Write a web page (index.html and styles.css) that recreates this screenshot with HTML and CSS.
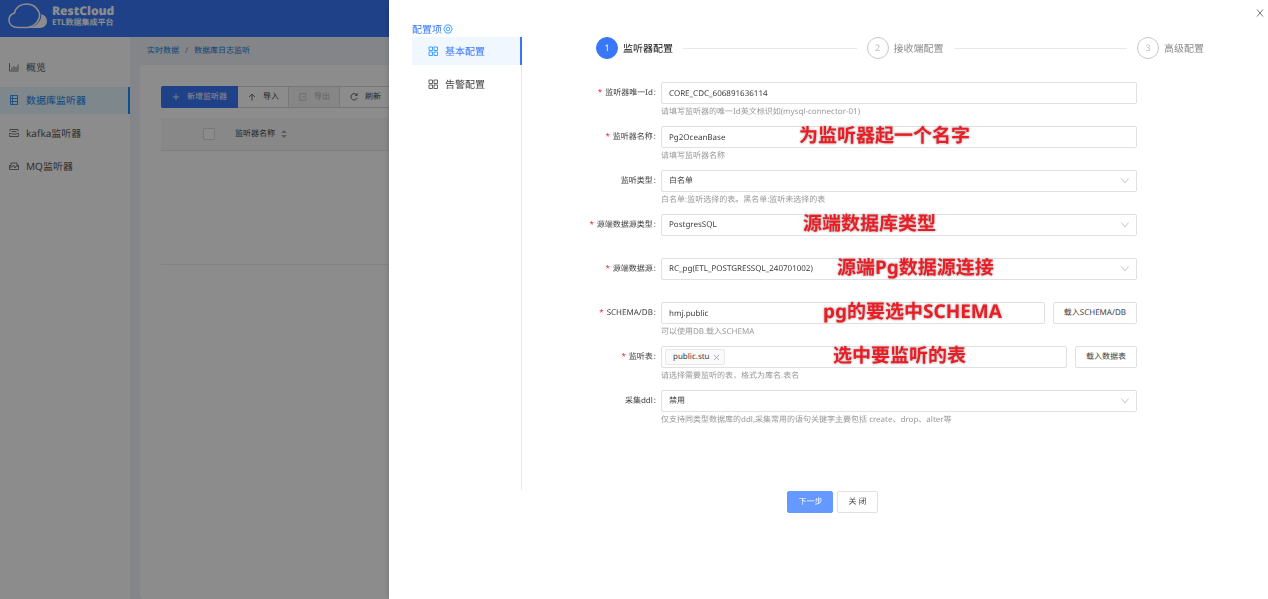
FILE: index.html
```
<!DOCTYPE html>
<html lang="zh-CN">
<head>
  <meta charset="UTF-8" />
  <meta name="viewport" content="width=device-width, initial-scale=1.0" />
  <title>RestCloud ETL数据集成平台</title>
  <link rel="stylesheet" href="styles.css">
</head>
<body>
  <div class="page">
    <header class="header">
      <svg class="logo" viewBox="0 0 40 26" fill="none">
        <path d="M33.500 11c3.500 1.200 5.500 3.800 5.500 7 0 4-3 7-7 7H21c7-1.500 12.500-6.500 12.500-14z" fill="#fff" stroke="none"/>
        <path d="M6.500 10C7.500 4.500 12.500 1 18.500 1 24 1 28 3.500 30.500 8c3.500 7-2.500 15.500-11 16.500H10C4.500 24.500 1 21.500 1 17c0-3.500 2-6 5.500-7z" stroke="#fff" stroke-width="1.600"/>
      </svg>
      <div class="brand">
        <strong>RestCloud</strong>
        <span>ETL数据集成平台</span>
      </div>
    </header>

    <div class="body">
      <nav class="sidebar">
        <a href="#">
          <svg viewBox="0 0 10 10"><path d="M.5 1v8h9M3 8V5.500M5 8V4M7 8V5M9 8V2.500"/></svg>概览
        </a>
        <a href="#" class="active">
          <svg viewBox="0 0 10 10"><path d="M1.500 .5h7v9h-7zM1.500 3.500h7M1.500 6.500h7M3.500 .5v9"/></svg>数据库监听器
        </a>
        <a href="#">
          <svg viewBox="0 0 10 10"><path d="M1 3V1.500h8V3M.5 6.500v2h9v-2M2.500 3.500h5M0 5.500h2.500M7.500 5.500H10M2.500 6h5"/></svg>kafka监听器
        </a>
        <a href="#">
          <svg viewBox="0 0 10 10"><path d="M.5 4.500v4h9v-4M.5 4.500H2V2h6v2.500h1.500M0 6h3l1.500-2L6 7l1.200-2H10"/></svg>MQ监听器
        </a>
      </nav>

      <main class="main">
        <div class="breadcrumb"><a href="#">实时数据</a><span>/</span><a href="#">数据库日志监听</a></div>
        <section class="card">
          <div class="toolbar">
            <button type="button" class="primary"><svg viewBox="0 0 10 10"><path d="M5 1v8M1 5h8"/></svg>新增监听器</button>
            <button type="button"><svg viewBox="0 0 10 10"><path d="M5 9.500V1.500M1.500 5L5 1.500 8.500 5"/></svg>导入</button>
            <button type="button" disabled><svg viewBox="0 0 10 10"><path d="M9 3V1H1v8h8V7M4 5h5"/></svg>导出</button>
            <button type="button"><svg viewBox="0 0 10 10"><path d="M8.500 2.500A4 4 0 1 0 9 6M9 .5v2.500H6.500"/></svg>刷新</button>
          </div>
          <table class="list">
            <thead>
              <tr>
                <th class="check"><input type="checkbox" aria-label="全选"></th>
                <th>监听器名称<svg class="sort" viewBox="0 0 6 10"><path d="M3 1l3 3H0zM3 9L0 6h6z"/></svg></th>
              </tr>
            </thead>
            <tbody>
              <tr><td colspan="2"></td></tr>
            </tbody>
          </table>
        </section>
      </main>
    </div>
  </div>

  <div class="mask"></div>

  <div class="drawer" role="dialog" aria-label="配置项">
    <button type="button" class="close" aria-label="关闭"><svg viewBox="0 0 10 10"><path d="M2 1.500l6 7M8 1.500l-6 7"/></svg></button>

    <aside class="tabs">
      <div class="tabs-title">配置项
        <svg viewBox="0 0 10 10"><path d="M3 1h4l2.300 4L7 9H3L.7 5z"/><circle cx="5" cy="5" r="1.800"/></svg>
      </div>
      <nav class="tabs-nav">
        <a href="#" class="active">
          <svg viewBox="0 0 10 10"><path d="M1 1h3.500v3.500H1zM6 1h3.500v3.500H6zM1 6h3.500v3.500H1zM6 6h3.500v3.500H6z"/></svg>基本配置
        </a>
        <a href="#">
          <svg viewBox="0 0 10 10"><path d="M1 1h3.500v3.500H1zM6 1h3.500v3.500H6zM1 6h3.500v3.500H1zM6 6h3.500v3.500H6z"/></svg>告警配置
        </a>
      </nav>
    </aside>

    <div class="content">
      <ol class="steps">
        <li class="current"><i>1</i><span>监听器配置</span></li>
        <li><i>2</i><span>接收端配置</span></li>
        <li><i>3</i><span>高级配置</span></li>
      </ol>

      <form class="form">
        <div class="row">
          <label for="uid" class="required">监听器唯一Id</label>
          <div class="control">
            <input type="text" id="uid" value="CORE_CDC_606891636114">
          </div>
          <p class="help">请填写监听器的唯一Id英文标识如(mysql-connector-01)</p>
        </div>
        <div class="row">
          <label for="name" class="required">监听器名称</label>
          <div class="control">
            <input type="text" id="name" value="Pg2OceanBase">
            <span class="note note-name">为监听器起一个名字</span>
          </div>
          <p class="help">请填写监听器名称</p>
        </div>
        <div class="row">
          <label for="type">监听类型</label>
          <div class="control">
            <select id="type"><option>白名单</option></select>
            <svg class="arrow" viewBox="0 0 8 8"><path d="M.5 1.500L4 6l3.500-4.500"/></svg>
          </div>
          <p class="help">白名单:监听选择的表。黑名单:监听未选择的表</p>
        </div>
        <div class="row">
          <label for="dbtype" class="required">源端数据源类型</label>
          <div class="control">
            <select id="dbtype"><option>PostgresSQL</option></select>
            <svg class="arrow" viewBox="0 0 8 8"><path d="M.5 1.500L4 6l3.500-4.500"/></svg>
            <span class="note note-dbtype">源端数据库类型</span>
          </div>
        </div>
        <div class="row">
          <label for="source" class="required">源端数据源</label>
          <div class="control">
            <select id="source"><option>RC_pg(ETL_POSTGRESSQL_240701002)</option></select>
            <svg class="arrow" viewBox="0 0 8 8"><path d="M.5 1.500L4 6l3.500-4.500"/></svg>
            <span class="note note-source">源端Pg数据源连接</span>
          </div>
        </div>
        <div class="row">
          <label for="schema" class="required">SCHEMA/DB</label>
          <div class="control">
            <input type="text" id="schema" value="hmj.public">
            <button type="button" class="btn">载入SCHEMA/DB</button>
            <span class="note note-schema">pg的要选中SCHEMA</span>
          </div>
          <p class="help">可以使用DB.载入SCHEMA</p>
        </div>
        <div class="row">
          <label for="tables" class="required">监听表</label>
          <div class="control">
            <div class="tags">
              <span class="tag">public.stu<button type="button" aria-label="移除"><svg viewBox="0 0 10 10"><path d="M1.500 1.500l7 7M8.500 1.500l-7 7"/></svg></button></span>
              <input type="text" id="tables">
            </div>
            <button type="button" class="btn">载入数据表</button>
            <span class="note note-tables">选中要监听的表</span>
          </div>
          <p class="help">请选择需要监听的表，格式为库名.表名</p>
        </div>
        <div class="row">
          <label for="ddl">采集ddl</label>
          <div class="control">
            <select id="ddl"><option>禁用</option></select>
            <svg class="arrow" viewBox="0 0 8 8"><path d="M.5 1.500L4 6l3.500-4.500"/></svg>
          </div>
          <p class="help">仅支持同类型数据库的ddl,采集常用的语句关键字主要包括 create、drop、alter等</p>
        </div>
        <div class="actions">
          <button type="button" class="btn btn-next">下一步</button>
          <button type="button" class="btn">关 闭</button>
        </div>
      </form>
    </div>
  </div>
</body>
</html>
```

FILE: styles.css
```
* {
  box-sizing: border-box;
}
body {
  margin: 0;
  font-family: "Noto Sans", "Noto Sans CJK SC", sans-serif;
  font-size: 8px;
  line-height: 12px;
  color: #404040;
  text-rendering: geometricPrecision;
}
a {
  color: inherit;
  text-decoration: none;
}
button, input, select {
  font: inherit;
  color: inherit;
  text-rendering: inherit;
}
svg {
  flex: none;
  width: 10px;
  height: 10px;
  fill: none;
  stroke: currentColor;
}

/* page behind the drawer */
.page {
  display: flex;
  flex-direction: column;
  min-height: 100vh;
}
.header {
  display: flex;
  align-items: center;
  gap: 4px;
  height: 37px;
  padding: 0 8px 6px;
  background: #3877f7;
  color: #fff;
}
.header .logo {
  width: 40px;
  height: 26px;
}
.brand {
  display: flex;
  flex-direction: column;
  padding-top: 1px;
  font-weight: bold;
}
.brand strong {
  font-size: 12px;
  line-height: 14px;
}
.brand span {
  font-size: 8px;
  line-height: 10px;
}
.body {
  display: flex;
  flex: 1;
}
.sidebar {
  display: flex;
  flex-direction: column;
  gap: 6px;
  width: 130px;
  padding-top: 17px;
  background: #fff;
}
.sidebar a {
  display: flex;
  align-items: center;
  gap: 7px;
  height: 27px;
  padding: 0 0 1px 9px;
  font-size: 10px;
  color: #595959;
}
.sidebar svg {
  stroke-width: 0.8;
}
.sidebar .active {
  background: #e6f7ff;
  border-right: 2px solid #1890ff;
  color: #1880e8;
}
.main {
  flex: 1;
  display: flex;
  flex-direction: column;
  padding-left: 10px;
  background: #eff3f9;
}
.breadcrumb {
  display: flex;
  gap: 6px;
  padding: 8px 7px;
  color: #888;
}
.breadcrumb a {
  color: #1880d8;
}
.card {
  flex: 1;
  padding: 21px;
  background: #fff;
  border-radius: 4px;
}
.toolbar {
  display: flex;
  margin-bottom: 10px;
}
.toolbar button {
  display: flex;
  align-items: center;
  gap: 7px;
  height: 22px;
  padding: 0 9px 0 10px;
  border: 1px solid #d9d9d9;
  border-left: 0;
  background: #fff;
}
.toolbar svg {
  width: 8px;
  height: 8px;
}
.toolbar .primary {
  padding: 0 10px 0 11px;
  background: #3877f7;
  border-color: #3877f7;
  border-radius: 2px 0 0 2px;
  color: #fff;
}
.toolbar button:disabled {
  background: #f5f5f5;
  color: #b8b8b8;
}
.list {
  width: 100%;
  border-collapse: collapse;
}
.list th {
  height: 32px;
  padding: 0;
  background: #f8f8f8;
  border-bottom: 1px solid #e8e8e8;
  font-weight: normal;
  text-align: left;
}
.list .check {
  width: 74px;
  padding-left: 42px;
}
.list input {
  display: block;
  appearance: none;
  width: 12px;
  height: 12px;
  margin: 0;
  border: 1px solid #d9d9d9;
  border-radius: 2px;
  background: #fff;
}
.list .sort {
  width: 6px;
  height: 10px;
  margin-left: 6px;
  vertical-align: middle;
  fill: #aaa;
  stroke: none;
}
.list td {
  height: 114px;
  border-bottom: 1px solid #eee;
}

.mask {
  position: fixed;
  inset: 0;
  background: rgba(0, 0, 0, 0.45);
}

/* drawer */
.drawer {
  position: fixed;
  top: 0;
  right: 0;
  bottom: 0;
  left: 389px;
  display: flex;
  padding: 22px 24px 0 23px;
  overflow: auto;
  background: #fff;
  box-shadow: -1px 0 5px rgba(0, 0, 0, 0.15);
}
.close {
  position: absolute;
  top: 8px;
  right: 3px;
  padding: 0;
  width: 10px;
  height: 10px;
  border: 0;
  background: none;
  color: #777;
}
.close svg {
  display: block;
}
.tabs {
  display: flex;
  flex-direction: column;
  flex: none;
  width: 110px;
  height: 468px;
}
.tabs-title {
  display: flex;
  align-items: center;
  gap: 1px;
  height: 14px;
  padding-bottom: 1px;
  font-size: 10px;
  color: #3877f7;
}
.tabs-title svg {
  color: #1890ff;
  stroke-width: 0.8;
}
.tabs-nav {
  display: flex;
  flex-direction: column;
  flex: 1;
  gap: 5px;
  padding-top: 1px;
  border-right: 1px solid #e8e8e8;
}
.tabs-nav a {
  display: flex;
  align-items: center;
  gap: 7px;
  height: 28px;
  padding-left: 16px;
  font-size: 10px;
}
.tabs-nav svg {
  stroke-width: 0.8;
}
.tabs-nav .active {
  margin-right: -1px;
  background: #f0f7ff;
  border-right: 2px solid #3877f7;
  color: #3877f7;
}
.tabs-nav .active svg {
  color: #1890ff;
}
.content {
  flex: 1;
  min-width: 0;
  padding-top: 15px;
}
.steps {
  display: flex;
  margin: 0 0 23px;
  padding: 0 40px 0 74px;
  list-style: none;
  font-size: 10px;
}
.steps li {
  display: flex;
  align-items: center;
  flex: 1;
  color: #8c8c8c;
}
.steps li:last-child {
  flex: none;
}
.steps li:not(:last-child)::after {
  content: "";
  flex: 1;
  height: 1px;
  margin: 0 10px;
  background: #e8e8e8;
}
.steps i {
  display: flex;
  align-items: center;
  justify-content: center;
  width: 22px;
  height: 22px;
  margin-right: 5px;
  border: 1px solid #c8c8c8;
  border-radius: 50%;
  font-size: 9px;
  font-style: normal;
  color: #bfbfbf;
}
.steps .current {
  color: #111;
}
.steps .current i {
  background: #3877f7;
  border-color: #3877f7;
  color: #fff;
}

/* form */
.row {
  display: grid;
  grid-template-columns: 139px minmax(0, 1fr);
  grid-template-rows: 22px 22px;
  padding-right: 107px;
}
.row label {
  align-self: center;
  padding-right: 5px;
  text-align: right;
}
.row label::after {
  content: ":";
  margin-left: 1px;
}
.row .required::before {
  content: "*";
  margin-right: 3px;
  color: #f5222d;
}
.control {
  position: relative;
  display: flex;
  gap: 8px;
}
.control > input, select, .tags {
  flex: 1;
  min-width: 0;
  height: 22px;
  padding: 0 7px;
  border: 1px solid #e0e0e0;
  border-radius: 2px;
  background: #fff;
}
select {
  appearance: none;
}
.arrow {
  position: absolute;
  top: 7px;
  right: 8px;
  width: 8px;
  height: 8px;
  color: #c4c4c4;
  pointer-events: none;
}
.tags {
  display: flex;
  align-items: center;
  padding: 0 3px;
}
.tags input {
  flex: 1;
  min-width: 0;
  border: 0;
  background: none;
}
.tag {
  display: flex;
  align-items: center;
  gap: 3px;
  height: 16px;
  padding: 0 4px 0 7px;
  border: 1px solid #e8e8e8;
  border-radius: 2px;
  background: #fafafa;
}
.tag button {
  padding: 0;
  border: 0;
  background: none;
  color: #8c8c8c;
}
.tag svg {
  display: block;
  width: 7px;
  height: 7px;
}
.help {
  grid-column: 2;
  margin: 2px 0 0;
  color: #999;
}
.btn {
  height: 22px;
  padding: 0 10px;
  border: 1px solid #e0e0e0;
  border-radius: 2px;
  background: #fff;
}
.btn-next {
  background: #6699ff;
  border-color: #6699ff;
  color: #fff;
}
.actions {
  display: flex;
  justify-content: center;
  gap: 4px;
  margin-top: 57px;
  padding-right: 101px;
}

/* red captions over the fields */
.note {
  position: absolute;
  top: -3px;
  font-size: 19px;
  font-weight: bold;
  line-height: 24px;
  color: #ed1c24;
  text-shadow: 0 0 2px #bbb, 0 0 3px #bbb;
  white-space: nowrap;
  pointer-events: none;
}
.note-name {
  left: 138px;
}
.note-dbtype {
  left: 142px;
}
.note-source {
  left: 176px;
}
.note-schema {
  left: 162px;
}
.note-tables {
  left: 172px;
}
```
